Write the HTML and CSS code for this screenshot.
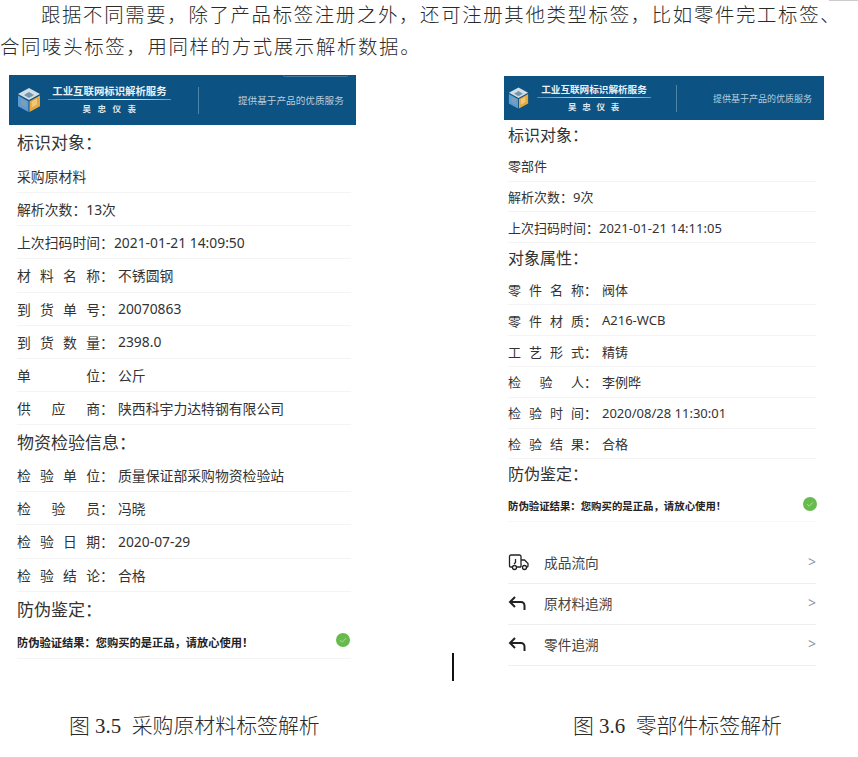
FILE: index.html
```html
<!DOCTYPE html>
<html lang="zh">
<head>
<meta charset="utf-8">
<title>标签解析</title>
<link rel="stylesheet" href="styles.css">
</head>
<body>
<div class="page">
  <div class="corner"></div>
  <p class="doc"><span class="first">跟据不同需要，除了产品标签注册之外，还可注册其他类型标签，比如零件完工标签、</span><br>合同唛头标签，用同样的方式展示解析数据。</p>
  <div class="figures">
    <section class="fig fig-a">
      <div class="phone">
        <header class="banner">
          <svg class="cube" viewBox="0 0 24 26"><path d="M12 1 23 7 12 13 1 7Z" fill="#d4dde2"/><path d="M12 5 17 8 12 11 7 8Z" fill="#6f97b2"/><path d="M1 8.500 11.500 14.200V25L1 19.200Z" fill="#5f9bd3"/><path d="M23 8.500 12.500 14.200V25L23 19.200Z" fill="#e6a93f"/><path d="M4 11.500 9.300 14.500V20.500L4 17.500Z" fill="#7f9db4"/><path d="M20 11.500 14.700 14.500V20.500L20 17.500Z" fill="#f1c879"/></svg>
          <div class="brand"><div class="brand-t">工业互联网标识解析服务</div><div class="swoosh"></div><div class="brand-s">吴忠仪表</div></div>
          <div class="vline"></div>
          <div class="slogan">提供基于产品的优质服务</div>
          <div class="tab"></div>
        </header>
        <h3>标识对象：</h3>
        <div class="row">采购原材料</div>
        <div class="row">解析次数：13次</div>
        <div class="row">上次扫码时间：2021-01-21 14:09:50</div>
        <div class="row"><span class="k">材料名称</span><span class="c">：</span>不锈圆钢</div>
        <div class="row"><span class="k">到货单号</span><span class="c">：</span>20070863</div>
        <div class="row"><span class="k">到货数量</span><span class="c">：</span>2398.0</div>
        <div class="row"><span class="k">单位</span><span class="c">：</span>公斤</div>
        <div class="row"><span class="k">供应商</span><span class="c">：</span>陕西科宇力达特钢有限公司</div>
        <h3>物资检验信息：</h3>
        <div class="row"><span class="k">检验单位</span><span class="c">：</span>质量保证部采购物资检验站</div>
        <div class="row"><span class="k">检验员</span><span class="c">：</span>冯晓</div>
        <div class="row"><span class="k">检验日期</span><span class="c">：</span>2020-07-29</div>
        <div class="row"><span class="k">检验结论</span><span class="c">：</span>合格</div>
        <h3>防伪鉴定：</h3>
        <div class="row verdict"><b>防伪验证结果：您购买的是正品，请放心使用！</b><svg class="ok" viewBox="0 0 14 14"><circle cx="7" cy="7" r="7" fill="#67bb4d"/><path d="M4 7.200 6.200 9.200 10 5.200" fill="none" stroke="#a8dd97" stroke-width="1"/></svg></div>
      </div>
      <p class="caption">图 3.5&nbsp; 采购原材料标签解析</p>
    </section>
    <section class="fig fig-b">
      <div class="phone">
        <header class="banner">
          <svg class="cube" viewBox="0 0 24 26"><path d="M12 1 23 7 12 13 1 7Z" fill="#d4dde2"/><path d="M12 5 17 8 12 11 7 8Z" fill="#6f97b2"/><path d="M1 8.500 11.500 14.200V25L1 19.200Z" fill="#5f9bd3"/><path d="M23 8.500 12.500 14.200V25L23 19.200Z" fill="#e6a93f"/><path d="M4 11.500 9.300 14.500V20.500L4 17.500Z" fill="#7f9db4"/><path d="M20 11.500 14.700 14.500V20.500L20 17.500Z" fill="#f1c879"/></svg>
          <div class="brand"><div class="brand-t">工业互联网标识解析服务</div><div class="swoosh"></div><div class="brand-s">吴忠仪表</div></div>
          <div class="vline"></div>
          <div class="slogan">提供基于产品的优质服务</div>
        </header>
        <h3>标识对象：</h3>
        <div class="row">零部件</div>
        <div class="row">解析次数：9次</div>
        <div class="row">上次扫码时间：2021-01-21 14:11:05</div>
        <h3>对象属性：</h3>
        <div class="row"><span class="k">零件名称</span><span class="c">：</span>阀体</div>
        <div class="row"><span class="k">零件材质</span><span class="c">：</span>A216-WCB</div>
        <div class="row"><span class="k">工艺形式</span><span class="c">：</span>精铸</div>
        <div class="row"><span class="k">检验人</span><span class="c">：</span>李例晔</div>
        <div class="row"><span class="k">检验时间</span><span class="c">：</span>2020/08/28 11:30:01</div>
        <div class="row"><span class="k">检验结果</span><span class="c">：</span>合格</div>
        <h3>防伪鉴定：</h3>
        <div class="row verdict"><b>防伪验证结果：您购买的是正品，请放心使用！</b><svg class="ok" viewBox="0 0 14 14"><circle cx="7" cy="7" r="7" fill="#67bb4d"/><path d="M4 7.200 6.200 9.200 10 5.200" fill="none" stroke="#a8dd97" stroke-width="1"/></svg></div>
        <div class="links">
          <div class="link"><svg class="ico" viewBox="0 0 22 18"><path d="M13 14V3.500A1.500 1.500 0 0 0 11.500 2H3A1.500 1.500 0 0 0 1.500 3.500V13a1 1 0 0 0 1 1h1.500M9 14h4M13 7h3.500l3.500 3.500V13a1 1 0 0 1-1 1h-.5M7.500 6v3.500L6 11" fill="none" stroke="#222" stroke-width="1.300"/><circle cx="6.500" cy="14.500" r="2" fill="none" stroke="#222" stroke-width="1.300"/><circle cx="16.500" cy="14.500" r="2" fill="none" stroke="#222" stroke-width="1.300"/></svg><span>成品流向</span><i>&gt;</i></div>
          <div class="link"><svg class="ico" viewBox="0 0 22 18"><path d="M7 3 2 8l5 5M2 8h11a3.500 3.500 0 0 1 3.500 3.500V16" fill="none" stroke="#222" stroke-width="2"/></svg><span>原材料追溯</span><i>&gt;</i></div>
          <div class="link"><svg class="ico" viewBox="0 0 22 18"><path d="M7 3 2 8l5 5M2 8h11a3.500 3.500 0 0 1 3.500 3.500V16" fill="none" stroke="#222" stroke-width="2"/></svg><span>零件追溯</span><i>&gt;</i></div>
        </div>
      </div>
      <p class="caption">图 3.6&nbsp; 零部件标签解析</p>
    </section>
  </div>
  <div class="cursor"></div>
</div>
</body>
</html>
```

FILE: styles.css
```css
* { box-sizing: border-box; }
html, body { margin: 0; padding: 0; background: #fff; }
.page {
  position: relative;
  width: 858px;
  height: 757px;
  overflow: hidden;
  font-family: "Noto Sans", "Noto Sans CJK SC", sans-serif;
  color: #333;
}
.corner { position: absolute; top: 0; right: 0; width: 29px; height: 1px; background: #ccc; }
.doc {
  margin: 0;
  height: 75px;
  font: 300 19.400px/32px "Liberation Serif", "Noto Sans CJK SC", serif;
  letter-spacing: 1.670px;
  color: #2a2a2a;
  white-space: nowrap;
}
.first { margin-left: 41px; }
.figures { display: flex; align-items: flex-start; }
.fig-a { width: 504px; padding-left: 9px; }
.fig-b { width: 320px; padding-top: 1px; }
.fig-a .phone { width: 347px; height: 637px; font-size: 13.850px; }
.fig-b .phone { width: 320px; height: 635px; font-size: 13px; }

.banner { position: relative; display: flex; align-items: center; background: #0c5282; color: #fff; }
.fig-a .banner { height: 50px; padding-left: 8px; }
.fig-b .banner { height: 44px; padding-left: 4px; }
.cube { flex: none; width: 24px; height: 26px; }
.fig-b .cube { width: 21px; height: 24px; }
.brand { margin-left: 7px; width: 123px; text-align: center; }
.fig-b .brand { margin-left: 8px; width: 114px; }
.brand-t { font-size: 10.400px; font-weight: 700; line-height: 13px; white-space: nowrap; color: #e8f0f5; }
.fig-b .brand-t { font-size: 9.600px; }
.swoosh { height: 1px; margin-top: 1px; background: linear-gradient(90deg, rgba(255,255,255,.3), #fff 60%, rgba(255,255,255,.4)); }
.brand-s { margin-top: 3px; font-size: 8.500px; line-height: 12px; font-weight: 700; letter-spacing: 6.500px; margin-right: -6px; color: #dfe8ee; }
.fig-b .brand-s { letter-spacing: 5.700px; margin-right: -5px; }
.vline { width: 1px; height: 27px; margin-left: 27px; background: #4d85a8; }
.fig-b .vline { margin-left: 25px; }
.slogan { margin-left: 39px; font-size: 9.650px; white-space: nowrap; color: #b8cfde; }
.fig-b .slogan { margin-left: 36px; font-size: 9px; }
.tab {
  position: absolute; top: 0; right: 8px; width: 65px; height: 2px;
  border: 1px solid #44789c; border-top: 0; border-radius: 0 0 6px 6px;
}

h3 { margin: 0; font-weight: 400; color: #333; white-space: nowrap; }
.fig-a h3 { height: 34px; padding: 0 8px; font-size: 17px; line-height: 36px; }
.fig-a .banner + h3 { height: 35px; }
.fig-b h3 { height: 31.400px; padding: 0 4px; font-size: 16px; line-height: 30.500px; }
.fig-b .banner + h3 { height: 30.800px; }

.row { display: flex; align-items: center; white-space: nowrap; border-bottom: 1px solid #f4f4f4; }
.fig-a .row { height: 33.150px; margin: 0 5px 0 8px; }
.fig-b .row { height: 30.800px; margin: 0 8px 0 4px; }
.k { text-align: justify; text-align-last: justify; display: inline-block; }
.fig-a .k { width: 83px; }
.fig-b .k { width: 76px; }
.c { display: inline-block; }
.fig-a .c { width: 18px; }
.fig-b .c { width: 18px; }
.verdict { justify-content: space-between; }
.verdict b { font-size: 11.250px; font-weight: 700; color: #222; }
.fig-b .verdict b { font-size: 10.400px; }
.ok { width: 14px; height: 14px; margin-top: -3px; margin-right: 1px; }
.fig-b .ok { margin-right: -1px; }
.fig-b .verdict { border-bottom-color: #f7f7f7; }

.links { margin: 21px 8px 0 4px; }
.link { display: flex; align-items: center; height: 41px; padding-bottom: 2px; border-bottom: 1px solid #efefef; font-size: 13.700px; color: #444; }
.ico { width: 22px; height: 18px; margin-right: 14px; flex: none; }
.link span { flex: 1; }
.link i { font-style: normal; font-size: 14px; color: #8a96a3; }

.caption { margin: 0; font: 300 20.900px/30px "Liberation Serif", "Noto Sans CJK SC", serif; color: #2a2a2a; white-space: nowrap; }
.fig-a .caption { padding: 0 0 0 60px; margin-top: -1px; }
.fig-b .caption { padding: 0 0 0 69px; }
.cursor { position: absolute; left: 452px; top: 653px; width: 2px; height: 28px; background: #111; }
```
